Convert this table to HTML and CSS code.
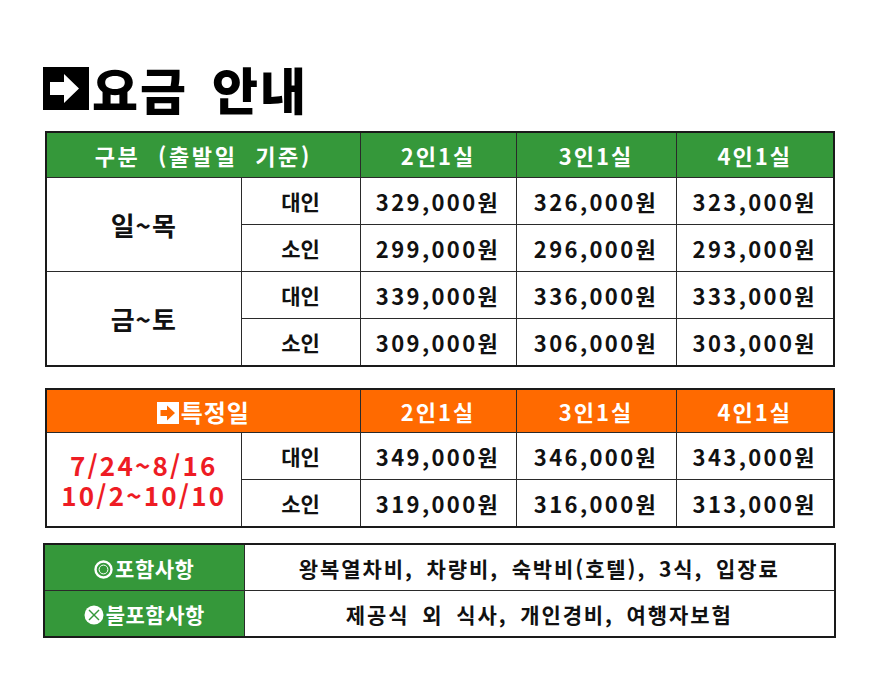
FILE: index.html
```html
<!DOCTYPE html>
<html lang="ko">
<head>
<meta charset="utf-8">
<link rel="stylesheet" href="styles.css">
</head>
<body>
<div class="page">
  <h1 class="title">
    <svg class="title-icon" viewBox="0 0 46 43" width="46" height="43">
      <rect x="0" y="0" width="46" height="43" fill="#000"/>
      <polygon points="7,15 21,15 21,7 36,21.5 21,36 21,28 7,28" fill="#fff"/>
    </svg>
    <span>요금 안내</span>
  </h1>

  <table class="price green">
    <colgroup><col class="c1"><col class="c2"><col class="c3"><col class="c4"><col class="c5"></colgroup>
    <thead>
      <tr><th colspan="2" class="wide">구분 (출발일 기준)</th><th>2인1실</th><th>3인1실</th><th>4인1실</th></tr>
    </thead>
    <tbody>
      <tr><td rowspan="2" class="day">일~목</td><td class="kind">대인</td><td>329,000원</td><td>326,000원</td><td>323,000원</td></tr>
      <tr><td class="kind">소인</td><td>299,000원</td><td>296,000원</td><td>293,000원</td></tr>
      <tr><td rowspan="2" class="day">금~토</td><td class="kind">대인</td><td>339,000원</td><td>336,000원</td><td>333,000원</td></tr>
      <tr><td class="kind">소인</td><td>309,000원</td><td>306,000원</td><td>303,000원</td></tr>
    </tbody>
  </table>

  <table class="price orange">
    <colgroup><col class="c1"><col class="c2"><col class="c3"><col class="c4"><col class="c5"></colgroup>
    <thead>
      <tr><th colspan="2" class="wide"><span class="hd-icon">
        <svg viewBox="0 0 22 22" width="22" height="22">
          <rect x="0" y="0" width="22" height="22" fill="#fff"/>
          <polygon points="3.5,8 10,8 10,3.5 18,11 10,18.5 10,14 3.5,14" fill="#ff6a00"/>
        </svg></span>특정일</th><th>2인1실</th><th>3인1실</th><th>4인1실</th></tr>
    </thead>
    <tbody>
      <tr><td rowspan="2" class="special"><span class="line">7/24~8/16</span><span class="line">10/2~10/10</span></td><td class="kind">대인</td><td>349,000원</td><td>346,000원</td><td>343,000원</td></tr>
      <tr><td class="kind">소인</td><td>319,000원</td><td>316,000원</td><td>313,000원</td></tr>
    </tbody>
  </table>

  <table class="info">
    <colgroup><col class="i1"><col class="i2"></colgroup>
    <tbody>
      <tr><th><span class="info-icon">
        <svg viewBox="0 0 19 19" width="19" height="19">
          <circle cx="9.5" cy="9.5" r="8" fill="none" stroke="#fff" stroke-width="2.4"/>
          <circle cx="9.5" cy="9.5" r="4.4" fill="none" stroke="#fff" stroke-width="1"/>
        </svg></span>포함사항</th><td>왕복열차비, 차량비, 숙박비(호텔), 3식, 입장료</td></tr>
      <tr><th><span class="info-icon">
        <svg viewBox="0 0 20 20" width="20" height="20">
          <circle cx="10" cy="10" r="9.5" fill="#fff"/>
          <line x1="5" y1="5" x2="15" y2="15" stroke="#35983a" stroke-width="1.4"/>
          <line x1="15" y1="5" x2="5" y2="15" stroke="#35983a" stroke-width="1.4"/>
        </svg></span>불포함사항</th><td>제공식 외 식사, 개인경비, 여행자보험</td></tr>
    </tbody>
  </table>
</div>
</body>
</html>
```

FILE: styles.css
```css
html, body {
  margin: 0;
  padding: 0;
  background: #fff;
}

body {
  font-family: "Noto Sans CJK KR", "Noto Sans", sans-serif;
  color: #111;
}

.page {
  width: 875px;
  height: 690px;
  box-sizing: border-box;
  padding: 66px 0 0 0;
  display: flex;
  flex-direction: column;
  align-items: flex-start;
}

.title {
  margin: 0 0 0 43px;
  height: 44px;
  display: flex;
  align-items: center;
  gap: 3px;
  font-size: 50px;
  font-weight: 900;
  line-height: 44px;
  letter-spacing: 2px;
  color: #000;
}

.title span {
  word-spacing: 8px;
}

.title-icon {
  display: block;
  flex: none;
}

.price {
  border-collapse: collapse;
  table-layout: fixed;
  width: 788px;
  margin-left: 45px;
  border: 2px solid #1a1a1a;
}

.green {
  margin-top: 21px;
}

.orange {
  margin-top: 21px;
}

.c1 { width: 195px; }
.c2 { width: 119px; }
.c3 { width: 156px; }
.c4 { width: 160px; }
.c5 { width: 158px; }

.price th,
.price td {
  border: 1px solid #2a2a2a;
  text-align: center;
  vertical-align: middle;
  padding: 0;
  font-weight: 700;
  white-space: nowrap;
}

.price th {
  height: 44px;
  color: #fff;
  font-size: 22px;
  letter-spacing: 2px;
}

.price th.wide {
  letter-spacing: 2.6px;
  word-spacing: 9px;
}

.green th {
  background: #35983a;
}

.orange th {
  background: #ff6a00;
  height: 42px;
}

.orange th.wide {
  font-size: 24px;
  letter-spacing: 1px;
}

.price td {
  height: 46px;
  font-size: 22px;
  color: #111;
  letter-spacing: 2.4px;
}

.price td.kind {
  font-size: 21px;
  letter-spacing: 0;
}

.price td.day {
  font-size: 26px;
  letter-spacing: 1px;
}

.price td.special {
  color: #ee1c24;
  font-size: 26px;
  letter-spacing: 2.2px;
}

.special .line {
  display: block;
  height: 30px;
  line-height: 30px;
}

.hd-icon {
  display: inline-block;
  vertical-align: -2px;
  margin-right: 2px;
}

.hd-icon svg {
  display: block;
}

.info {
  border-collapse: collapse;
  table-layout: fixed;
  width: 791px;
  margin-left: 43px;
  margin-top: 15px;
  border: 2px solid #1a1a1a;
}

.i1 { width: 200px; }
.i2 { width: 591px; }

.info th,
.info td {
  border: 1px solid #2a2a2a;
  height: 45px;
  padding: 0;
  text-align: center;
  vertical-align: middle;
  font-size: 21px;
  font-weight: 700;
  white-space: nowrap;
}

.info th {
  background: #35983a;
  color: #fff;
  letter-spacing: 0.5px;
}

.info td {
  color: #111;
  letter-spacing: 1.9px;
  word-spacing: 5px;
}

.info-icon {
  display: inline-block;
  vertical-align: -2px;
  margin-right: 2px;
}

.info-icon svg {
  display: block;
}
```
